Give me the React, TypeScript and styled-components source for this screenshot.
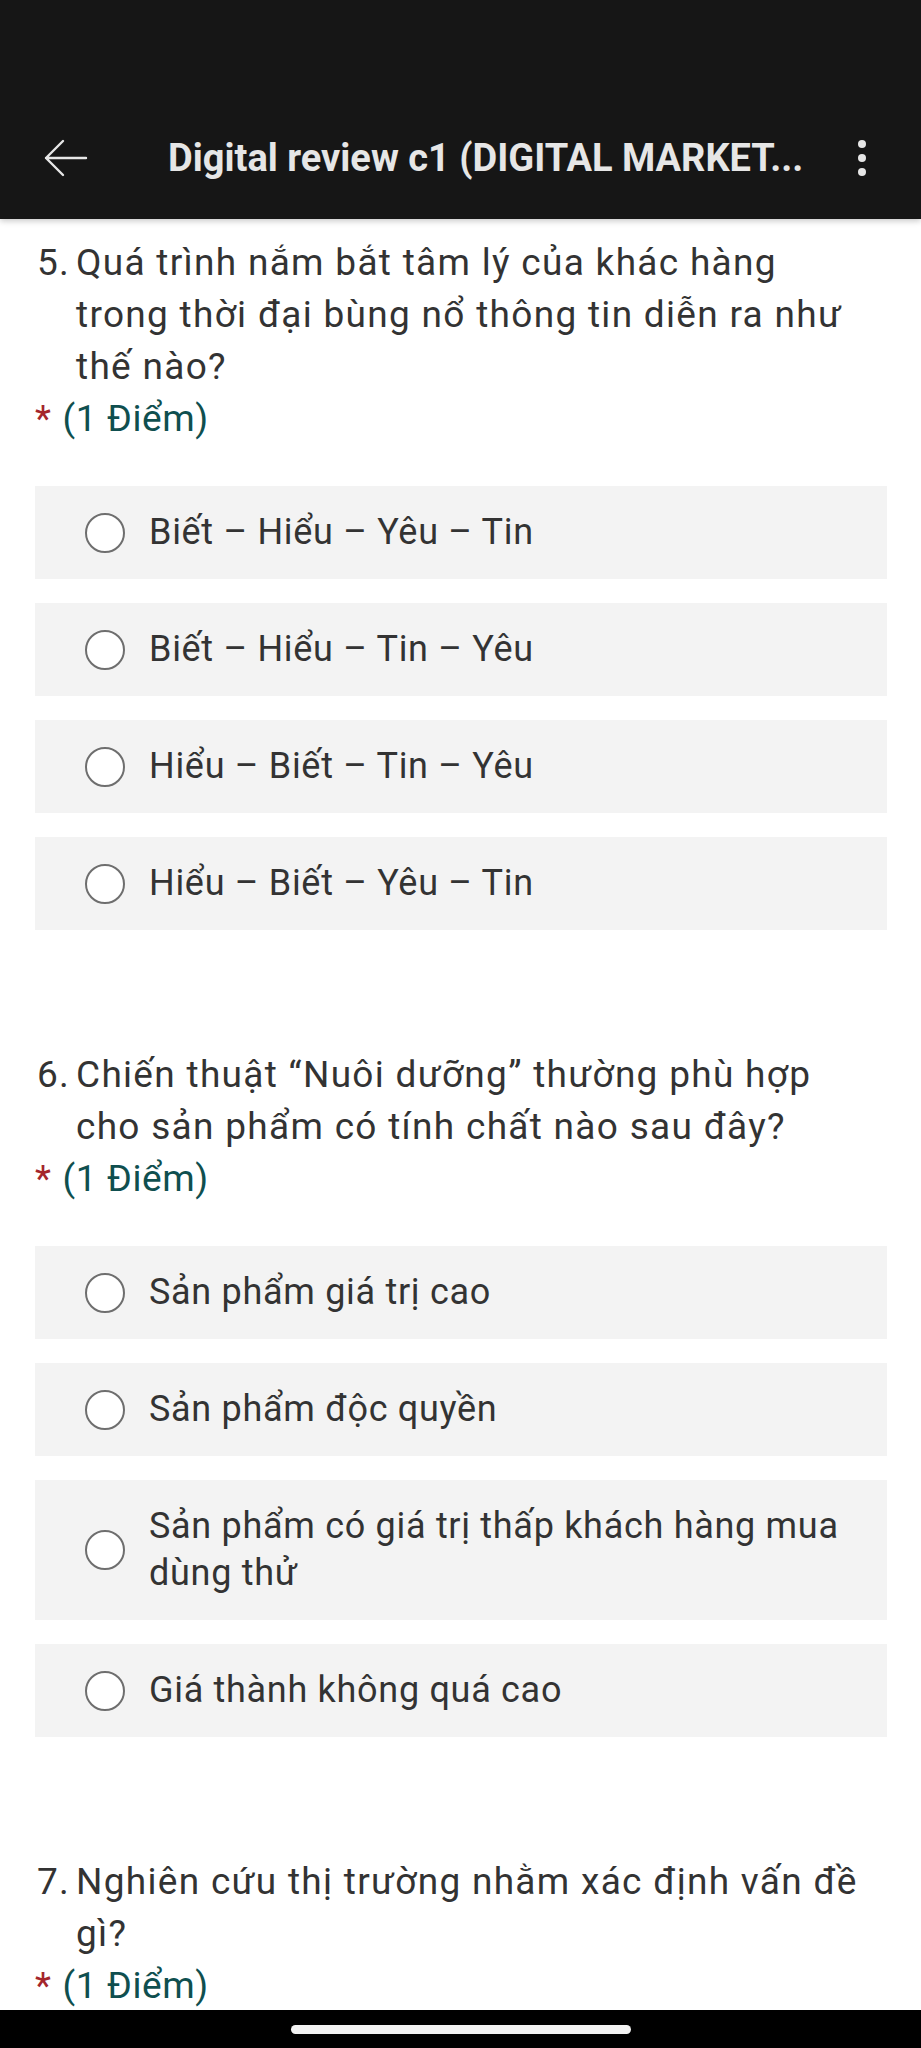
import React from "react";
import styled, { createGlobalStyle } from "styled-components";

const GlobalStyle = createGlobalStyle`
  html, body { margin: 0; padding: 0; background: #ffffff; }
  body { font-family: Roboto, "Noto Sans", "Liberation Sans", sans-serif; }
  * { box-sizing: border-box; }
`;

const Screen = styled.div`
  width: 921px;
  height: 2048px;
  display: flex;
  flex-direction: column;
  overflow: hidden;
  background: #ffffff;
`;

const Header = styled.header`
  flex: 0 0 219px;
  background: #161616;
  display: flex;
  align-items: flex-end;
  box-shadow: 0 2px 6px rgba(0, 0, 0, 0.22);
  position: relative;
  z-index: 2;
`;

const TitleBar = styled.div`
  height: 116px;
  width: 100%;
  display: flex;
  align-items: center;
  padding: 0 54px 6px 44px;
`;

const IconButton = styled.div`
  display: flex;
  align-items: center;
  justify-content: center;
  flex: 0 0 auto;
`;

const Title = styled.h1`
  flex: 1;
  margin: 0 0 0 80px;
  font-family: Roboto, "Liberation Sans", sans-serif;
  font-weight: 700;
  font-size: 38px;
  color: #e6e6e6;
  white-space: nowrap;
  overflow: hidden;
`;

const Content = styled.main`
  flex: 1;
  overflow: hidden;
  padding: 18px 34px 0 35px;
`;

const Question = styled.section`
  margin-bottom: 119px;
`;

const QuestionTitle = styled.div`
  display: grid;
  grid-template-columns: 39px 1fr;
  font-size: 37px;
  letter-spacing: 1.3px;
  line-height: 52px;
  color: #333333;
  padding: 0 16px 0 2px;
`;

const Points = styled.div`
  font-size: 37px;
  letter-spacing: 0.6px;
  line-height: 52px;
  color: #0f4f4f;
  margin-bottom: 41px;
`;

const Star = styled.span`
  color: #a4262c;
  margin-right: 11px;
`;

const Options = styled.div`
  display: flex;
  flex-direction: column;
  gap: 24px;
`;

const Option = styled.label`
  display: flex;
  align-items: center;
  background: #f3f3f3;
  min-height: 93px;
  padding: 23px 40px 23px 50px;
`;

const Radio = styled.span`
  flex: 0 0 40px;
  width: 40px;
  height: 40px;
  border-radius: 50%;
  border: 2.5px solid #6e6e6e;
  background: #ffffff;
  margin-right: 24px;
`;

const OptionText = styled.span`
  font-size: 36px;
  letter-spacing: 0.7px;
  line-height: 47px;
  color: #333333;
`;

const NavBar = styled.div`
  flex: 0 0 38px;
  background: #000000;
  display: flex;
  justify-content: center;
  padding-top: 15px;
  position: relative;
  z-index: 2;
`;

const HomePill = styled.div`
  width: 340px;
  height: 9px;
  border-radius: 5px;
  background: #f2f2f2;
`;

type Q = { n: number; title: string; options: string[] };

const questions: Q[] = [
  {
    n: 5,
    title: "Quá trình nắm bắt tâm lý của khác hàng trong thời đại bùng nổ thông tin diễn ra như thế nào?",
    options: [
      "Biết – Hiểu – Yêu – Tin",
      "Biết – Hiểu – Tin – Yêu",
      "Hiểu – Biết – Tin – Yêu",
      "Hiểu – Biết – Yêu – Tin",
    ],
  },
  {
    n: 6,
    title: "Chiến thuật “Nuôi dưỡng” thường phù hợp cho sản phẩm có tính chất nào sau đây?",
    options: [
      "Sản phẩm giá trị cao",
      "Sản phẩm độc quyền",
      "Sản phẩm có giá trị thấp khách hàng mua dùng thử",
      "Giá thành không quá cao",
    ],
  },
  {
    n: 7,
    title: "Nghiên cứu thị trường nhằm xác định vấn đề gì?",
    options: [],
  },
];

export default function App() {
  return (
    <>
      <GlobalStyle />
      <Screen>
        <Header>
          <TitleBar>
            <IconButton>
              <svg width="44" height="38" viewBox="0 0 44 38" fill="none">
                <path d="M42 19H2M19 2L2 19l17 17" stroke="#e6e6e6" strokeWidth="2.4" strokeLinecap="round" strokeLinejoin="round" />
              </svg>
            </IconButton>
            <Title>Digital review c1 (DIGITAL MARKET...</Title>
            <IconButton>
              <svg width="10" height="38" viewBox="0 0 10 38">
                <circle cx="5" cy="5" r="4" fill="#e6e6e6" />
                <circle cx="5" cy="19" r="4" fill="#e6e6e6" />
                <circle cx="5" cy="33" r="4" fill="#e6e6e6" />
              </svg>
            </IconButton>
          </TitleBar>
        </Header>
        <Content>
          {questions.map((q) => (
            <Question key={q.n}>
              <QuestionTitle>
                <span>{q.n}.</span>
                <span>{q.title}</span>
              </QuestionTitle>
              <Points>
                <Star>*</Star>(1 Điểm)
              </Points>
              {q.options.length > 0 && (
                <Options>
                  {q.options.map((o) => (
                    <Option key={o}>
                      <Radio />
                      <OptionText>{o}</OptionText>
                    </Option>
                  ))}
                </Options>
              )}
            </Question>
          ))}
        </Content>
        <NavBar>
          <HomePill />
        </NavBar>
      </Screen>
    </>
  );
}
